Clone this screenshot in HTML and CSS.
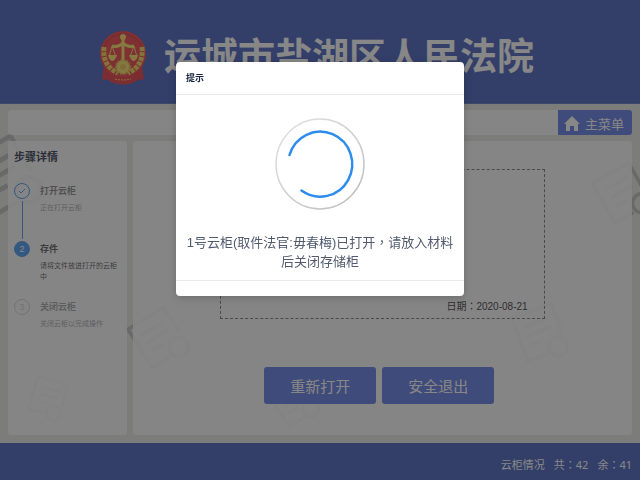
FILE: index.html
```
<!DOCTYPE html>
<html lang="zh-CN">
<head>
  <meta charset="UTF-8" />
  <meta name="viewport" content="width=device-width, initial-scale=1.0" />
  <title>运城市盐湖区人民法院</title>
  <link rel="stylesheet" href="styles.css">
</head>
<body>
  <div class="page">
    <header class="header">
      <svg class="emblem" viewBox="0 0 48 54" aria-hidden="true">
        <path d="M5 34 L3 49 Q9 47 12 51 Q24 56 36 51 Q39 47 45 49 L43 34 Z" fill="#e0202c"/>
        <circle cx="24" cy="23" r="23" fill="#e8262c"/>
        <circle cx="24" cy="23" r="20" fill="none" stroke="#c81a22" stroke-width="1"/>
        <path d="M5 16 Q3 35 19 42 M43 16 Q45 35 29 42" fill="none" stroke="#f0cc40" stroke-width="5" stroke-dasharray="4 1"/>
        <path d="M24 4 V34" stroke="#f8dc50" stroke-width="3"/>
        <path d="M13 15 Q19 17 24 12 Q29 17 35 15" fill="none" stroke="#f8dc50" stroke-width="3"/>
        <circle cx="24" cy="6" r="3" fill="#f8dc50"/>
        <path d="M13 15 L10 26 M13 15 L17 26 M35 15 L31 26 M35 15 L38 26" stroke="#f8dc50" stroke-width="1"/>
        <path d="M9 24 H18 Q16 30 13 30 Q10 29 9 24 Z M30 24 H39 Q38 29 35 30 Q32 30 30 24 Z" fill="#f8dc50"/>
        <circle cx="24" cy="36" r="7" fill="#f8dc50" stroke="#e0a93a" stroke-width="2" stroke-dasharray="2 1"/>
        <circle cx="24" cy="36" r="3" fill="#e8b93a"/>
        <path d="M16 48 Q24 50 32 48" fill="none" stroke="#f0cc40" stroke-width="1" stroke-dasharray="2 1"/>
      </svg>
      <h1>运城市盐湖区人民法院</h1>
    </header>

    <div class="content">
      <svg class="watermark" viewBox="0 0 640 340" preserveAspectRatio="none" aria-hidden="true">
        <defs>
          <g id="doc" fill="none" stroke-width="3">
            <path d="M18 38 H0 V0 H35 V26"/>
            <path d="M7 10 H28 M7 18 H28 M7 26 H18"/>
            <circle cx="28" cy="35" r="8"/>
          </g>
        </defs>
        <use href="#doc" transform="translate(-38 60) rotate(-30) scale(1.6)"/>
        <use href="#doc" transform="translate(38 273) rotate(16) scale(.9)"/>
        <use href="#doc" transform="translate(128 226) rotate(-32) scale(1.2)"/>
        <use href="#doc" transform="translate(268 293) rotate(-35) scale(1)"/>
        <use href="#doc" transform="translate(512 215) rotate(-20) scale(1.2)"/>
        <use href="#doc" transform="translate(592 80) rotate(-30) scale(1.2)"/>
      </svg>

      <nav class="topbar">
        <button class="menu-btn" type="button">
          <svg viewBox="0 0 16 16" width="16" height="16" aria-hidden="true">
            <path d="M8 0 L16 8 H14 V15 H10 V10 H6 V15 H2 V8 H0 Z" fill="#fff"/>
          </svg>
          主菜单
        </button>
      </nav>

      <div class="columns">
        <aside class="sidebar">
          <h2>步骤详情</h2>
          <ol class="steps">
            <li class="step done">
              <span class="dot">
                <svg viewBox="0 0 8 8" width="8" height="8" aria-hidden="true">
                  <path d="M1 4 L3 6 L7 2" fill="none" stroke="#2d8cf0"/>
                </svg>
              </span>
              <div>
                <h3>打开云柜</h3>
                <p>正在打开云柜</p>
              </div>
            </li>
            <li class="step current">
              <span class="dot">2</span>
              <div>
                <h3>存件</h3>
                <p>请将文件放进打开的云柜中</p>
              </div>
            </li>
            <li class="step">
              <span class="dot">3</span>
              <div>
                <h3>关闭云柜</h3>
                <p>关闭云柜以完成操作</p>
              </div>
            </li>
          </ol>
        </aside>

        <main class="main">
          <section class="receipt">
            <p>日期<span class="punct" lang="zh-TW">：</span>2020-08-21</p>
          </section>
          <div class="actions">
            <button type="button">重新打开</button>
            <button type="button">安全退出</button>
          </div>
        </main>
      </div>
    </div>

    <footer class="footer">
      <span>云柜情况</span>
      <span>共<span class="punct" lang="zh-TW">：</span>42</span>
      <span>余<span class="punct" lang="zh-TW">：</span>41</span>
    </footer>
  </div>

  <div class="mask">
    <div class="modal" role="dialog" aria-modal="true" aria-labelledby="modalTitle">
      <div class="modal-header" id="modalTitle">提示</div>
      <div class="modal-body">
        <svg class="spinner" viewBox="0 0 92 92" aria-hidden="true">
          <defs>
            <linearGradient id="ring" x1="0" y1="0" x2="1" y2="1">
              <stop offset="0" stop-color="#e4e4e4"/>
              <stop offset="1" stop-color="#bdbdbd"/>
            </linearGradient>
          </defs>
          <ellipse cx="46" cy="46" rx="44" ry="45" fill="none" stroke="url(#ring)" stroke-width="1.5"/>
          <path d="M15.5 37 A32 32.5 0 1 1 27.5 72.5" fill="none" stroke="#2d8cf0" stroke-width="2.5" stroke-linecap="round"/>
        </svg>
        <p>1号云柜(取件法官:毋春梅)已打开<span class="punct" lang="zh-TW">，</span>请放入材料后关闭存储柜</p>
      </div>
      <div class="modal-footer"></div>
    </div>
  </div>
</body>
</html>
```

FILE: styles.css
```
* {
  box-sizing: border-box;
}
body {
  margin: 0;
  font-family: "Liberation Sans", "Noto Sans CJK SC", sans-serif;
  color: #515a6e;
}
h1, h2, h3, p, ol {
  margin: 0;
  padding: 0;
}
button {
  border: 0;
  font-family: inherit;
  color: #fff;
  background: #4b69de;
  cursor: pointer;
}
.punct {
  font-family: "Noto Sans CJK TC", sans-serif;
}
.page {
  display: flex;
  flex-direction: column;
  min-height: 100vh;
}

/* header */
.header {
  display: flex;
  align-items: center;
  justify-content: center;
  gap: 17px;
  height: 104px;
  padding: 12px 7px 0 0;
  background: #2d4bb4;
  border-bottom: 1px solid #4a63bb;
}
.header h1 {
  font-size: 37px;
  line-height: 40px;
  color: #fff;
}
.emblem {
  width: 48px;
  height: 54px;
}

/* content */
.content {
  position: relative;
  flex: 1;
  display: flex;
  flex-direction: column;
  gap: 6px;
  padding: 6px 8px 8px;
  background: #e3e3e1;
  overflow: hidden;
}
.watermark {
  position: absolute;
  top: 0;
  left: 0;
  width: 100%;
  height: 100%;
  stroke: #b4b4b4;
}
.topbar, .sidebar, .main {
  position: relative;
  background: rgba(255, 255, 255, 0.86);
  border-radius: 3px;
}
.topbar {
  display: flex;
  justify-content: flex-end;
}
.menu-btn {
  display: flex;
  align-items: center;
  gap: 5px;
  height: 25px;
  padding: 2px 8px 0 6px;
  font-size: 13px;
  border-radius: 0 3px 3px 0;
}
.columns {
  flex: 1;
  display: flex;
  gap: 6px;
}

/* steps */
.sidebar {
  width: 19%;
  padding: 8px 4px 8px 6px;
}
.sidebar h2 {
  font-size: 11px;
  line-height: 16px;
  color: #17233d;
}
.steps {
  margin-top: 18px;
  list-style: none;
}
.step {
  position: relative;
  display: flex;
  gap: 10px;
  min-height: 58px;
  color: #999;
}
.step h3 {
  font-size: 9px;
  line-height: 17px;
}
.step p {
  font-size: 7px;
  line-height: 11px;
  padding-top: 2px;
}
.dot {
  display: flex;
  align-items: center;
  justify-content: center;
  flex: none;
  width: 16px;
  height: 16px;
  border: 1px solid #ccc;
  border-radius: 50%;
  font-size: 9px;
  color: #ccc;
}
.step.done .dot {
  border-color: #2d8cf0;
}
.step.done::after {
  content: "";
  position: absolute;
  top: 18px;
  bottom: 2px;
  left: 8px;
  width: 1px;
  background: #2d8cf0;
}
.step.done h3 {
  color: #777;
}
.step.current {
  color: #444;
}
.step.current .dot {
  color: #fff;
  background: #2d8cf0;
  border-color: #2d8cf0;
}

/* main */
.main {
  flex: 1;
  padding: 28px 0;
}
.receipt {
  display: flex;
  align-items: flex-end;
  justify-content: flex-end;
  width: 65%;
  height: 150px;
  margin: 0 auto;
  padding: 4px 16px;
  border: 1px dashed #666;
  font-size: 10px;
  line-height: 14px;
  color: #222;
}
.actions {
  display: flex;
  justify-content: center;
  margin-top: 48px;
}
.actions button {
  width: 112px;
  height: 37px;
  margin-right: 6px;
  font-size: 15px;
  border-radius: 3px;
}

/* footer */
.footer {
  display: flex;
  align-items: center;
  justify-content: flex-end;
  gap: 9px;
  height: 37px;
  padding: 4px 8px 0;
  font-family: "Noto Sans", "Noto Sans CJK SC", sans-serif;
  font-size: 11px;
  color: #fff;
  background: #2d4bb4;
}

/* modal */
.mask {
  position: fixed;
  inset: 0;
  padding-top: 62px;
  background: rgba(55, 55, 55, 0.6);
}
.modal {
  width: 45%;
  margin: 0 auto;
  background: #fff;
  border-radius: 4px;
  box-shadow: 0 2px 8px rgba(0, 0, 0, 0.2);
}
.modal-header {
  padding: 8px 10px;
  font-size: 9px;
  font-weight: bold;
  line-height: 16px;
  color: #17233d;
  border-bottom: 1px solid #e8eaec;
}
.modal-body {
  padding: 23px 10px 9px;
  text-align: center;
}
.modal-body p {
  margin-top: 22px;
  font-size: 13px;
  line-height: 19px;
}
.spinner {
  display: block;
  width: 92px;
  height: 92px;
  margin: 0 auto;
}
.modal-footer {
  height: 16px;
  border-top: 1px solid #e8eaec;
}
```
